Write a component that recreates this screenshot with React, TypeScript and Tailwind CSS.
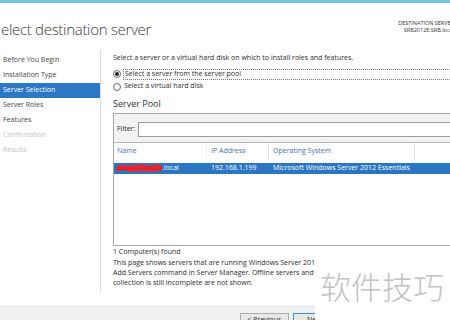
import React from "react";

const Radio = ({ checked }: { checked?: boolean }) => (
  <span className="w-[8px] h-[8px] rounded-full border border-[#6a6a6a] bg-white flex items-center justify-center shrink-0">
    {checked && <span className="w-[4px] h-[4px] rounded-full bg-[#222]" />}
  </span>
);

const Scribble = () => (
  <svg width="46" height="9" viewBox="0 0 46 9" className="shrink-0">
    <path
      d="M2 4.5 C8 2 14 6 20 3.5 S32 6 38 3.5 S43 5 44 4.5"
      fill="none"
      stroke="#e8212b"
      strokeWidth="5"
      strokeLinecap="round"
    />
    <path d="M3 2.5 L30 2 M12 7 L43 6.5" stroke="#f0262f" strokeWidth="1.5" strokeLinecap="round" />
  </svg>
);

export default function App() {
  const nav = [
    { t: "Before You Begin", s: "n" },
    { t: "Installation Type", s: "n" },
    { t: "Server Selection", s: "sel" },
    { t: "Server Roles", s: "n" },
    { t: "Features", s: "n" },
    { t: "Confirmation", s: "dis" },
    { t: "Results", s: "dis" },
  ];
  return (
    <div
      className="relative w-[450px] h-[320px] overflow-hidden bg-white flex flex-col text-[#2b2b2b]"
      style={{ fontFamily: '"Open Sans", "Noto Sans", sans-serif' }}
    >
      <div className="h-[3px] bg-[#74c7e3] shrink-0" />
      {/* header */}
      <div className="h-[45px] shrink-0 flex items-start">
        <div className="pt-[16px] pl-[1px] text-[15px] leading-[20px] font-light text-[#3a3a3a] tracking-[-0.3px] whitespace-nowrap">
          elect destination server
        </div>
        <div className="ml-auto -mr-[4px] pt-[17px] text-right text-[5.5px] leading-[7px] text-[#333] whitespace-nowrap">
          <div>DESTINATION SERVER</div>
          <div>SRB2012E.SRB.local</div>
        </div>
      </div>
      {/* body */}
      <div className="h-[258px] shrink-0 flex">
        <div className="w-[100px] shrink-0 pt-[5px] flex flex-col">
          {nav.map((n) => (
            <div
              key={n.t}
              className={
                "h-[15px] pl-[3px] flex items-center text-[7px] whitespace-nowrap " +
                (n.s === "sel"
                  ? "bg-[#2c78c4] text-white"
                  : n.s === "dis"
                  ? "text-[#c4c4c4]"
                  : "text-[#444]")
              }
            >
              {n.t}
            </div>
          ))}
        </div>
        <div className="w-px shrink-0 bg-[#dcdcdc] mt-[2px] mb-[14px]" />
        <div className="flex-1 min-w-0 pl-[12px] flex flex-col text-[7px]">
          <div className="mt-[4px] h-[12px] flex items-center whitespace-nowrap">
            Select a server or a virtual hard disk on which to install roles and features.
          </div>
          <div className="mt-[4px] h-[12px] flex items-center gap-[2px] whitespace-nowrap">
            <Radio checked />
            <span className="flex-1 border border-dotted border-[#777] h-[11px] flex items-center pl-[1px] -mr-[10px]">
              Select a server from the server pool
            </span>
          </div>
          <div className="h-[13px] flex items-center gap-[3px] whitespace-nowrap">
            <Radio />
            <span>Select a virtual hard disk</span>
          </div>
          <div className="mt-[5px] h-[12px] flex items-center text-[9px] text-[#333] whitespace-nowrap">
            Server Pool
          </div>
          {/* box */}
          <div className="mt-[3px] w-[360px] h-[133px] shrink-0 border border-[#a9a9a9] flex flex-col">
            <div className="h-[29px] bg-[#f2f2f2] border-b border-[#b5b5b5] flex items-start pt-[8px] pl-[3px] gap-[3px]">
              <span className="h-[14px] flex items-center">Filter:</span>
              <div className="flex-1 h-[15px] bg-white border border-[#9c9c9c]" />
            </div>
            <div className="h-[17px] flex items-stretch text-[#3f70ae] whitespace-nowrap">
              <div className="w-[93px] pl-[3px] flex items-center border-r border-[#f0f0f0]">Name</div>
              <div className="w-[62px] pl-[4px] flex items-center border-r border-[#e2e2e2]">IP Address</div>
              <div className="w-[146px] pl-[4px] flex items-center border-r border-[#e2e2e2]">Operating System</div>
              <div className="flex-1" />
            </div>
            <div className="mt-[3px] h-[11px] bg-[#2b76c2] text-white flex items-center whitespace-nowrap">
              <div className="w-[93px] pl-[2px] flex items-center">
                <Scribble />
                <span>.local</span>
              </div>
              <div className="w-[62px] pl-[4px]">192.168.1.199</div>
              <div className="pl-[4px]">Microsoft Windows Server 2012 Essentials</div>
            </div>
          </div>
          <div className="mt-[1px] h-[11px] flex items-center whitespace-nowrap">1 Computer(s) found</div>
          <div className="leading-[10px] whitespace-nowrap">
            <div>This page shows servers that are running Windows Server 2012 or a newer release of Windows Server, and that have been added by using the</div>
            <div>Add Servers command in Server Manager. Offline servers and newly-added servers from which data</div>
            <div>collection is still incomplete are not shown.</div>
          </div>
        </div>
      </div>
      {/* footer */}
      <div className="flex-1 bg-[#f0f0f0] border-t border-[#e4e4e4] pl-[240px] pt-[6px] flex gap-[4px] items-start text-[7px]">
        <div className="w-[49px] h-[20px] shrink-0 border border-[#adadad] bg-[#e8e8e8] flex items-start justify-center pt-[1px] leading-[10px]">
          &lt; Previous
        </div>
        <div className="w-[49px] h-[20px] shrink-0 border border-[#3c8fe0] bg-[#e8e8e8] flex items-start justify-center pt-[1px] leading-[10px]">
          Next &gt;
        </div>
        <div className="w-[49px] h-[20px] shrink-0 border border-[#adadad] bg-[#e8e8e8] flex items-start justify-center pt-[1px] leading-[10px]">
          Install
        </div>
      </div>
      {/* watermark overlay */}
      <div className="absolute left-[315px] top-[250px] w-[135px] h-[70px] bg-white flex items-center pl-[5px]">
        <span
          className="text-[31px] leading-none text-[#c2c2c2] tracking-[0px]"
          style={{ fontFamily: '"Noto Sans CJK SC", sans-serif', fontWeight: 300 }}
        >
          软件技巧
        </span>
      </div>
    </div>
  );
}
